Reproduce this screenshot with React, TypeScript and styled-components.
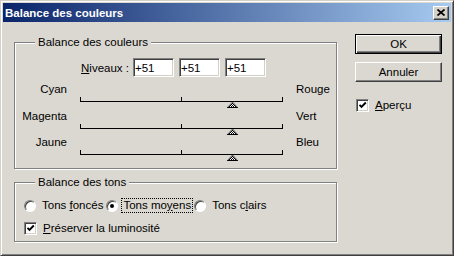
import React from 'react';
import styled, { createGlobalStyle } from 'styled-components';

const BG = '#dbd8d1';
const FACE = '#d4d0c8';
const FONT = '"Liberation Sans", Arial, sans-serif';

const GlobalStyle = createGlobalStyle`
  html, body {
    margin: 0;
    padding: 0;
    background: ${BG};
  }
  body {
    font-family: ${FONT};
    font-size: 11.5px;
    color: #000;
  }
`;

const sliders = [
  { left: 'Cyan', right: 'Rouge', value: 51 },
  { left: 'Magenta', right: 'Vert', value: 51 },
  { left: 'Jaune', right: 'Bleu', value: 51 },
];

const Thumb = ({ id }: { id: string }) => (
  <svg width="11" height="6" viewBox="0 0 11 6">
    <defs>
      <pattern id={id} width="2" height="2" patternUnits="userSpaceOnUse">
        <rect width="2" height="2" fill="#fff" />
        <rect width="1" height="1" fill="#000" />
        <rect x="1" y="1" width="1" height="1" fill="#000" />
      </pattern>
    </defs>
    <polygon points="5.5,0 11,6 0,6" fill={`url(#${id})`} />
    <polyline points="0,5.5 11,5.5" stroke="#000" strokeWidth="1" />
    <polyline points="5.5,0 0.5,5.5" stroke="#333" strokeWidth="0.8" fill="none" />
    <polyline points="5.5,0 10.5,5.5" stroke="#333" strokeWidth="0.8" fill="none" />
  </svg>
);

const Check = () => (
  <svg width="9" height="9" viewBox="0 0 9 9">
    <polyline points="1.5,3.8 3.5,5.8 7.8,1.5" fill="none" stroke="#000" strokeWidth="1.9" />
  </svg>
);

const App = () => {
  return (
    <>
      <GlobalStyle />
      <Window>
        <TitleBar>
          <Title>Balance des couleurs</Title>
          <CloseButton>
            <svg width="8" height="7" viewBox="0 0 8 7">
              <path d="M0.5 0.5 L7.5 6.5 M7.5 0.5 L0.5 6.5" stroke="#000" strokeWidth="1.7" />
            </svg>
          </CloseButton>
        </TitleBar>
        <Body>
          <LeftCol>
            <GroupBox $height={134}>
              <GroupTitle>Balance des couleurs</GroupTitle>
              <LevelsRow>
                <LevelsLabel>
                  <u>N</u>iveaux :
                </LevelsLabel>
                <LevelInput readOnly value="+51" />
                <LevelInput readOnly value="+51" />
                <LevelInput readOnly value="+51" />
              </LevelsRow>
              {sliders.map((s, i) => (
                <SliderRow key={s.left}>
                  <SideLabel $align="right">{s.left}</SideLabel>
                  <Track>
                    <MidTick />
                    <ThumbHolder style={{ left: `${((s.value + 100) / 200) * 100}%` }}>
                      <Thumb id={`dither${i}`} />
                    </ThumbHolder>
                  </Track>
                  <SideLabel $align="left">{s.right}</SideLabel>
                </SliderRow>
              ))}
            </GroupBox>
            <GroupBox $height={67} $gap={6}>
              <GroupTitle>Balance des tons</GroupTitle>
              <RadioRow>
                <RadioOption>
                  <Radio />
                  <OptionText>
                    Tons <u>f</u>oncés
                  </OptionText>
                </RadioOption>
                <RadioOption>
                  <Radio $checked />
                  <OptionText $focused>
                    Tons mo<u>y</u>ens
                  </OptionText>
                </RadioOption>
                <RadioOption>
                  <Radio />
                  <OptionText>
                    Tons c<u>l</u>airs
                  </OptionText>
                </RadioOption>
              </RadioRow>
              <CheckRow>
                <CheckBox>
                  <Check />
                </CheckBox>
                <OptionText>
                  <u>P</u>réserver la luminosité
                </OptionText>
              </CheckRow>
            </GroupBox>
          </LeftCol>
          <RightCol>
            <Button $default>OK</Button>
            <Button>Annuler</Button>
            <PreviewRow>
              <CheckBox>
                <Check />
              </CheckBox>
              <OptionText>
                <u>A</u>perçu
              </OptionText>
            </PreviewRow>
          </RightCol>
        </Body>
      </Window>
    </>
  );
};

const Window = styled.div`
  box-sizing: border-box;
  width: 454px;
  height: 256px;
  padding: 2px;
  background: ${BG};
  border: 1px solid;
  border-color: ${FACE} #404040 #404040 ${FACE};
  box-shadow: inset 1px 1px 0 #fff, inset -1px -1px 0 #808080;
  display: flex;
  flex-direction: column;
  overflow: hidden;
`;

const TitleBar = styled.div`
  height: 19px;
  flex-shrink: 0;
  display: flex;
  align-items: center;
  padding-left: 2px;
  background: linear-gradient(to right, #0a246a, #a6caf0);
`;

const Title = styled.span`
  color: #fff;
  font-weight: bold;
  font-size: 11.5px;
  line-height: 14px;
`;

const CloseButton = styled.div`
  box-sizing: border-box;
  margin-left: auto;
  margin-right: 2px;
  width: 16px;
  height: 14px;
  display: flex;
  align-items: center;
  justify-content: center;
  background: ${FACE};
  border: 1px solid;
  border-color: #fff #404040 #404040 #fff;
  box-shadow: inset -1px -1px 0 #808080;
`;

const Body = styled.div`
  display: flex;
  padding: 12px 0 0 11px;
`;

const LeftCol = styled.div`
  width: 323px;
  padding-top: 1px;
  display: flex;
  flex-direction: column;
`;

const GroupBox = styled.fieldset<{ $height: number; $gap?: number }>`
  box-sizing: border-box;
  width: 323px;
  height: ${(p) => p.$height}px;
  margin: ${(p) => p.$gap ?? 0}px 0 0 0;
  padding: 0;
  min-inline-size: 0;
  border: 1px solid #808080;
  box-shadow: inset 1px 1px 0 #fff, 1px 1px 0 #fff;
`;

const GroupTitle = styled.legend`
  margin-left: 20px;
  padding: 0 3px;
  height: 14px;
  line-height: 14px;
  background: ${BG};
`;

const LevelsRow = styled.div`
  display: flex;
  align-items: center;
  margin-top: 9px;
  height: 19px;
`;

const LevelsLabel = styled.label`
  width: 114px;
  margin-right: 4px;
  text-align: right;
  line-height: 14px;
`;

const LevelInput = styled.input`
  box-sizing: border-box;
  width: 41px;
  height: 19px;
  margin: 0 5px 0 0;
  padding: 1px 0 0 1px;
  font-family: ${FONT};
  font-size: 11.5px;
  color: #000;
  background: #fff;
  border: 1px solid;
  border-color: #808080 #fff #fff #808080;
  box-shadow: inset 1px 1px 0 #404040, inset -1px -1px 0 ${FACE};
  outline: none;
`;

const SliderRow = styled.div`
  display: grid;
  grid-template-columns: 52px 203px auto;
  column-gap: 13px;
  height: 26.5px;
`;

const SideLabel = styled.span<{ $align: 'left' | 'right' }>`
  text-align: ${(p) => p.$align};
  padding-top: 5px;
  line-height: 14px;
`;

const Track = styled.div`
  position: relative;
  box-sizing: border-box;
  margin-top: 20px;
  height: 5px;
  border: 1px solid #000;
  border-top: none;
`;

const MidTick = styled.div`
  position: absolute;
  left: 100px;
  top: 0;
  width: 1px;
  height: 4px;
  background: #000;
`;

const ThumbHolder = styled.div`
  position: absolute;
  top: 5px;
  margin-left: -6px;
  width: 11px;
  height: 6px;
  line-height: 0;
`;

const RadioRow = styled.div`
  display: flex;
  align-items: center;
  gap: 1px;
  margin-top: 9px;
  padding-left: 9px;
  height: 15px;
`;

const RadioOption = styled.div`
  display: flex;
  align-items: center;
`;

const Radio = styled.span<{ $checked?: boolean }>`
  box-sizing: border-box;
  position: relative;
  width: 12px;
  height: 12px;
  border-radius: 50%;
  background: #fff;
  border: 1px solid;
  border-color: #808080 #fff #fff #808080;
  box-shadow: inset 1px 1px 0 #404040;
  &::after {
    content: '';
    display: ${(p) => (p.$checked ? 'block' : 'none')};
    position: absolute;
    left: 3px;
    top: 3px;
    width: 4px;
    height: 4px;
    border-radius: 50%;
    background: #000;
  }
`;

const OptionText = styled.span<{ $focused?: boolean }>`
  margin-left: ${(p) => (p.$focused ? 3 : 4)}px;
  padding: 0 1px;
  line-height: 13px;
  border: 1px ${(p) => (p.$focused ? 'dotted #000' : 'solid transparent')};
  white-space: nowrap;
`;

const CheckRow = styled.div`
  display: flex;
  align-items: center;
  margin-top: 8px;
  padding-left: 9px;
`;

const CheckBox = styled.span`
  box-sizing: border-box;
  width: 13px;
  height: 13px;
  display: flex;
  align-items: center;
  justify-content: center;
  background: #fff;
  border: 1px solid;
  border-color: #808080 #fff #fff #808080;
  box-shadow: inset 1px 1px 0 #404040, inset -1px -1px 0 ${FACE};
`;

const RightCol = styled.div`
  width: 87px;
  margin-left: 18px;
  display: flex;
  flex-direction: column;
`;

const Button = styled.button<{ $default?: boolean }>`
  box-sizing: border-box;
  width: 87px;
  height: 20px;
  margin: 0 0 8px 0;
  padding: 0;
  font-family: ${FONT};
  font-size: 11.5px;
  color: #000;
  background: ${BG};
  border: 1px solid;
  border-color: ${(p) => (p.$default ? '#000' : '#fff #404040 #404040 #fff')};
  box-shadow: ${(p) =>
    p.$default
      ? 'inset 1px 1px 0 #fff, inset -1px -1px 0 #404040, inset -2px -2px 0 #808080'
      : 'inset -1px -1px 0 #808080'};
`;

const PreviewRow = styled.div`
  display: flex;
  align-items: center;
  margin-top: 8px;
  padding-left: 1px;
`;

export default App;
